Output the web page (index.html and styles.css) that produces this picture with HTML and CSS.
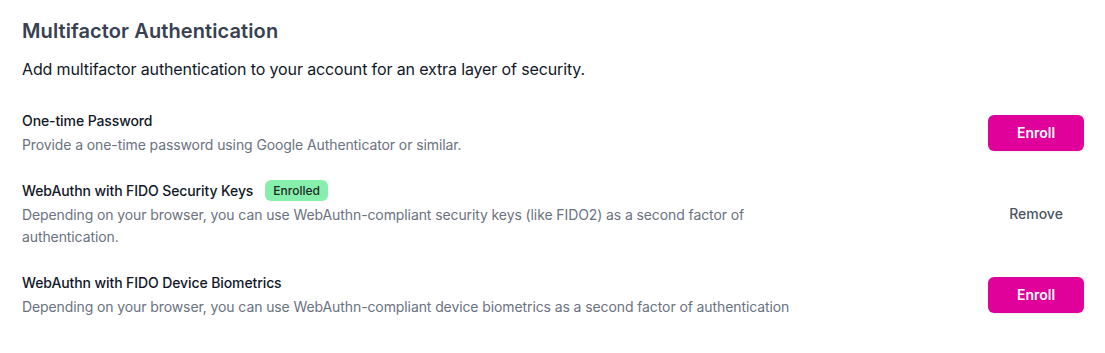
FILE: index.html
```html
<!DOCTYPE html>
<html>
<head>
<meta charset="utf-8">
<link rel="stylesheet" href="styles.css">
</head>
<body>
<section class="mfa">
  <h2 class="mfa-title">Multifactor Authentication</h2>
  <p class="mfa-intro">Add multifactor authentication to your account for an extra layer of security.</p>
  <div class="factor-list">
    <div class="factor">
      <div class="factor-info">
        <div class="factor-head"><span class="factor-name">One-time Password</span></div>
        <p class="factor-desc">Provide a one-time password using Google Authenticator or similar.</p>
      </div>
      <button class="btn-enroll">Enroll</button>
    </div>
    <div class="factor">
      <div class="factor-info">
        <div class="factor-head"><span class="factor-name">WebAuthn with FIDO Security Keys</span><span class="badge">Enrolled</span></div>
        <p class="factor-desc">Depending on your browser, you can use WebAuthn-compliant security keys (like FIDO2) as a second factor of authentication.</p>
      </div>
      <button class="btn-remove">Remove</button>
    </div>
    <div class="factor">
      <div class="factor-info">
        <div class="factor-head"><span class="factor-name">WebAuthn with FIDO Device Biometrics</span></div>
        <p class="factor-desc">Depending on your browser, you can use WebAuthn-compliant device biometrics as a second factor of authentication</p>
      </div>
      <button class="btn-enroll">Enroll</button>
    </div>
  </div>
</section>
</body>
</html>
```
FILE: styles.css
```css
* { box-sizing: border-box; }
html, body { margin: 0; background: #ffffff; }
body {
  font-family: Inter, "Noto Sans", sans-serif;
  color: #111827;
}
.mfa {
  padding: 18px 21px 0 22px;
}
.mfa-title {
  margin: 0;
  font-size: 20px;
  line-height: 26px;
  font-weight: 600;
  color: #374151;
  letter-spacing: 0.1px;
}
.mfa-intro {
  margin: 13px 0 0;
  font-size: 16px;
  line-height: 24px;
  color: #111827;
  letter-spacing: -0.13px;
}
.factor-list {
  margin-top: 28px;
  display: flex;
  flex-direction: column;
  gap: 23px;
}
.factor {
  display: flex;
  align-items: center;
  justify-content: space-between;
  gap: 32px;
}
.factor-info { max-width: 790px; }
.factor-head {
  display: flex;
  align-items: center;
  gap: 12px;
  height: 22px;
}
.factor-name {
  font-size: 14px;
  font-weight: 500;
  color: #111827;
  letter-spacing: -0.1px;
}
.badge {
  display: inline-flex;
  align-items: center;
  height: 21px;
  padding: 0 8px;
  border-radius: 6px;
  background: #86efac;
  font-size: 12px;
  font-weight: 500;
  color: #1f2a24;
}
.factor-desc {
  margin: 3px 0 0;
  font-size: 14px;
  line-height: 22px;
  color: #6b7280;
  letter-spacing: -0.1px;
}
.btn-enroll {
  flex: none;
  width: 96px;
  height: 36px;
  border: 0;
  border-radius: 6px;
  background: #e0009a;
  color: #ffffff;
  font-family: inherit;
  font-size: 14px;
  font-weight: 600;
  box-shadow: 0 1px 2px rgba(0,0,0,0.08);
}
.btn-remove {
  flex: none;
  width: 96px;
  height: 36px;
  border: 0;
  background: transparent;
  color: #4b5563;
  font-family: inherit;
  font-size: 14px;
  font-weight: 500;
}
```
